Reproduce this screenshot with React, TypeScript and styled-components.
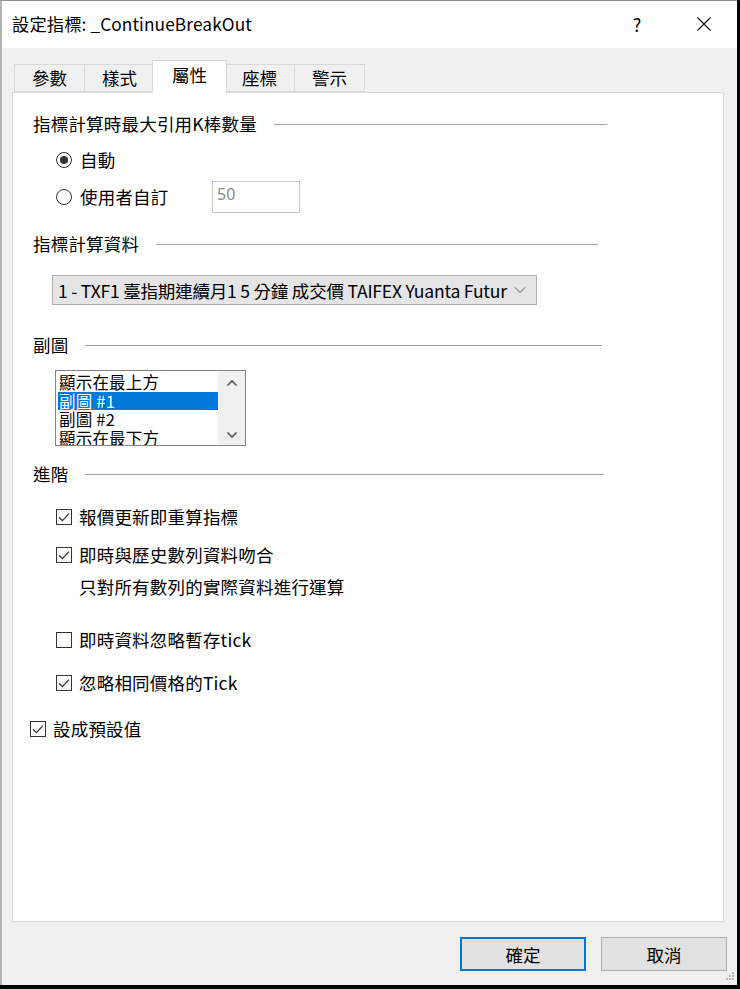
import * as React from 'react'
import styled, { createGlobalStyle } from 'styled-components'

const GlobalStyle = createGlobalStyle`
    *, *::before, *::after {
        box-sizing: border-box;
    }
    body {
        margin: 0;
        background: #000;
        font-family: "Noto Sans CJK TC", "Noto Sans", sans-serif;
        color: #000;
    }
`

const tabs = ['參數', '樣式', '屬性', '座標', '警示']
const subCharts = ['顯示在最上方', '副圖 #1', '副圖 #2', '顯示在最下方']

const CheckMark = () => (
    <svg width="14" height="14" viewBox="0 0 14 14">
        <path d="M2 7.2 L5.4 10.6 L12 3.6" fill="none" stroke="#333" strokeWidth="1.3" />
    </svg>
)

const Radio = ({ checked, width, children }: { checked?: boolean; width?: number; children: React.ReactNode }) => (
    <OptionRow>
        <RadioCircle>{checked && <RadioDot />}</RadioCircle>
        <RadioLabel $width={width}>{children}</RadioLabel>
    </OptionRow>
)

const Check = ({ checked, children }: { checked?: boolean; children: React.ReactNode }) => (
    <OptionRow>
        <CheckBox>{checked && <CheckMark />}</CheckBox>
        <CheckLabel>{children}</CheckLabel>
    </OptionRow>
)

const Heading = ({ lineEnd, children }: { lineEnd: number; children: React.ReactNode }) => (
    <HeadingRow $width={lineEnd - 33}>
        <span>{children}</span>
        <HeadingLine />
    </HeadingRow>
)

const App = () => (
    <Screen>
        <GlobalStyle />
        <Window>
            <TitleBar>
                <Title>設定指標: _ContinueBreakOut</Title>
                <CaptionButton $width={68}>?</CaptionButton>
                <CaptionButton $width={66}>
                    <svg width="16" height="16" viewBox="0 0 16 16">
                        <path d="M1.5 1.5 L14.5 14.5 M14.5 1.5 L1.5 14.5" stroke="#111" strokeWidth="1.1" />
                    </svg>
                </CaptionButton>
            </TitleBar>

            <Body>
                <TabStrip>
                    {tabs.map(t => (
                        <Tab key={t} $active={t === '屬性'}>{t}</Tab>
                    ))}
                </TabStrip>

                <Panel>
                    <Block $top={0}>
                        <Heading lineEnd={607}>指標計算時最大引用K棒數量</Heading>
                    </Block>
                    <Indent $top={12} $left={26}>
                        <Radio checked>自動</Radio>
                    </Indent>
                    <Indent $top={9} $left={26}>
                        <Radio width={132}>使用者自訂</Radio>
                        <NumberBox>50</NumberBox>
                    </Indent>

                    <Block $top={19}>
                        <Heading lineEnd={598}>指標計算資料</Heading>
                    </Block>
                    <Indent $top={19} $left={22}>
                        <Select>
                            <SelectText>1 - TXF1 臺指期連續月1 5 分鐘 成交價 TAIFEX Yuanta Futur</SelectText>
                            <svg width="12" height="8" viewBox="0 0 12 8">
                                <path d="M1 1.5 L6 6.5 L11 1.5" fill="none" stroke="#555" strokeWidth="1" />
                            </svg>
                        </Select>
                    </Indent>

                    <Block $top={28}>
                        <Heading lineEnd={602}>副圖</Heading>
                    </Block>
                    <Indent $top={13} $left={25}>
                        <ListBox>
                            <ListItems>
                                {subCharts.map(s => (
                                    <ListItem key={s} $selected={s === '副圖 #1'}>{s}</ListItem>
                                ))}
                            </ListItems>
                            <ScrollBar>
                                <svg width="12" height="8" viewBox="0 0 12 8">
                                    <path d="M1.5 6.5 L6 2 L10.5 6.5" fill="none" stroke="#555" strokeWidth="1.6" />
                                </svg>
                                <svg width="12" height="8" viewBox="0 0 12 8">
                                    <path d="M1.5 1.5 L6 6 L10.5 1.5" fill="none" stroke="#555" strokeWidth="1.6" />
                                </svg>
                            </ScrollBar>
                        </ListBox>
                    </Indent>

                    <Block $top={16}>
                        <Heading lineEnd={604}>進階</Heading>
                    </Block>
                    <Indent $top={19} $left={26}>
                        <Check checked>報價更新即重算指標</Check>
                    </Indent>
                    <Indent $top={14} $left={26}>
                        <Check checked>即時與歷史數列資料吻合</Check>
                    </Indent>
                    <Indent $top={8} $left={49}>
                        <Note>只對所有數列的實際資料進行運算</Note>
                    </Indent>
                    <Indent $top={29} $left={26}>
                        <Check>即時資料忽略暫存tick</Check>
                    </Indent>
                    <Indent $top={19} $left={26}>
                        <Check checked>忽略相同價格的Tick</Check>
                    </Indent>
                    <Indent $top={22} $left={0}>
                        <Check checked>設成預設值</Check>
                    </Indent>
                </Panel>

                <ButtonRow>
                    <DialogButton $primary>確定</DialogButton>
                    <DialogButton>取消</DialogButton>
                </ButtonRow>
            </Body>

            <Grip width="12" height="12" viewBox="0 0 12 12">
                {[[9, 1], [6, 4], [9, 4], [3, 7], [6, 7], [9, 7]].map(([x, y]) => (
                    <rect key={`${x}-${y}`} x={x} y={y + 1} width="2" height="2" fill="#b8b8b8" />
                ))}
            </Grip>
        </Window>
    </Screen>
)

const Screen = styled.div`
    width: 740px;
    height: 989px;
    background: #000;
    overflow: hidden;
`

const Window = styled.div`
    position: relative;
    width: 737px;
    height: 985px;
    display: flex;
    flex-direction: column;
    background: #f0f0f0;
    border-top: 1px solid #8c8c8c;
    border-left: 2px solid #b4b4b4;
`

const TitleBar = styled.div`
    height: 47px;
    flex: none;
    display: flex;
    align-items: center;
    background: #fff;
    padding-left: 10px;
`

const Title = styled.div`
    flex: 1;
    font-size: 17.3px;
    letter-spacing: 0.1px;
    line-height: 20px;
    padding-bottom: 2px;
`

const CaptionButton = styled.div<{ $width: number }>`
    width: ${p => p.$width}px;
    height: 47px;
    display: flex;
    align-items: center;
    justify-content: center;
    font-size: 18px;
    padding-bottom: 2px;
`

const Body = styled.div`
    flex: 1;
    display: flex;
    flex-direction: column;
    padding: 12px 13px 14px 10px;
`

const TabStrip = styled.div`
    position: relative;
    z-index: 1;
    height: 32px;
    display: flex;
    align-items: flex-end;
    padding-left: 3px;
`

const Tab = styled.div<{ $active?: boolean }>`
    height: ${p => (p.$active ? 33 : 28)}px;
    margin: 0 ${p => (p.$active ? -2 : 0)}px ${p => (p.$active ? -1 : 0)}px;
    margin-left: ${p => (p.$active ? -3 : -1)}px;
    padding: 0 ${p => (p.$active ? 19 : 17)}px ${p => (p.$active ? 5 : 0)}px;
    display: flex;
    align-items: center;
    background: ${p => (p.$active ? '#fff' : '#f0f0f0')};
    border: 1px solid #d9d9d9;
    border-bottom: ${p => (p.$active ? 'none' : '1px solid #d9d9d9')};
    position: relative;
    z-index: ${p => (p.$active ? 2 : 1)};
    font-size: 17.5px;
    line-height: 20px;
`

const Panel = styled.div`
    flex: 1;
    background: #fff;
    border: 1px solid #d9d9d9;
    padding: 19px 0 0 17px;
    font-size: 17.5px;
    letter-spacing: 0.2px;
`

const Block = styled.div<{ $top: number }>`
    margin-top: ${p => p.$top}px;
`

const Indent = styled.div<{ $top: number; $left: number }>`
    display: flex;
    align-items: center;
    margin-top: ${p => p.$top}px;
    padding-left: ${p => p.$left}px;
`

const HeadingRow = styled.div<{ $width: number }>`
    width: ${p => p.$width}px;
    height: 24px;
    margin-left: 3px;
    display: flex;
    align-items: center;
    line-height: 24px;
`

const HeadingLine = styled.div`
    flex: 1;
    height: 1px;
    margin-left: 17px;
    background: #a0a0a0;
`

const OptionRow = styled.div`
    display: flex;
    align-items: center;
    height: 24px;
`

const RadioCircle = styled.div`
    width: 16px;
    height: 16px;
    border-radius: 50%;
    border: 1px solid #333;
    display: flex;
    align-items: center;
    justify-content: center;
`

const RadioDot = styled.div`
    width: 8px;
    height: 8px;
    border-radius: 50%;
    background: #333;
`

const RadioLabel = styled.span<{ $width?: number }>`
    margin-left: 8px;
    width: ${p => (p.$width ? `${p.$width}px` : 'auto')};
    line-height: 24px;
`

const NumberBox = styled.div`
    width: 88px;
    height: 32px;
    border: 1px solid #cccccc;
    background: #fff;
    color: #8a8a8a;
    font-family: "Noto Sans", sans-serif;
    font-size: 16px;
    line-height: 20px;
    padding: 2px 4px;
`

const CheckBox = styled.div`
    width: 16px;
    height: 16px;
    border: 1px solid #333;
    display: flex;
    align-items: center;
    justify-content: center;
`

const CheckLabel = styled.span`
    margin-left: 7px;
    line-height: 24px;
`

const Note = styled.div`
    line-height: 24px;
`

const Select = styled.div`
    width: 485px;
    height: 30px;
    display: flex;
    align-items: center;
    background: #e5e5e5;
    border: 1px solid #adadad;
    padding: 0 10px 0 5px;
`

const SelectText = styled.div`
    flex: 1;
    white-space: nowrap;
    overflow: hidden;
    font-size: 17.5px;
    letter-spacing: -0.2px;
`

const ListBox = styled.div`
    width: 191px;
    height: 76px;
    display: flex;
    border: 1px solid #828282;
    background: #fff;
    overflow: hidden;
`

const ListItems = styled.div`
    width: 162px;
    padding: 2px 0 0 2px;
`

const ListItem = styled.div<{ $selected?: boolean }>`
    height: 18.5px;
    line-height: 18.5px;
    font-size: 16.5px;
    padding-left: 1px;
    white-space: nowrap;
    background: ${p => (p.$selected ? '#0078d7' : 'transparent')};
    color: ${p => (p.$selected ? '#fff' : '#000')};
`

const ScrollBar = styled.div`
    flex: 1;
    display: flex;
    flex-direction: column;
    justify-content: space-between;
    align-items: center;
    padding: 8px 0 6px;
    background: #f0f0f0;
`

const ButtonRow = styled.div`
    display: flex;
    justify-content: flex-end;
    gap: 15px;
    margin: 15px -3px 0 0;
`

const DialogButton = styled.div<{ $primary?: boolean }>`
    width: 126px;
    height: 34px;
    display: flex;
    align-items: center;
    justify-content: center;
    background: #e1e1e1;
    border: ${p => (p.$primary ? '2px solid #0078d7' : '1px solid #adadad')};
    font-size: 17.5px;
`

const Grip = styled.svg`
    position: absolute;
    right: 2px;
    bottom: 3px;
`

export default App
